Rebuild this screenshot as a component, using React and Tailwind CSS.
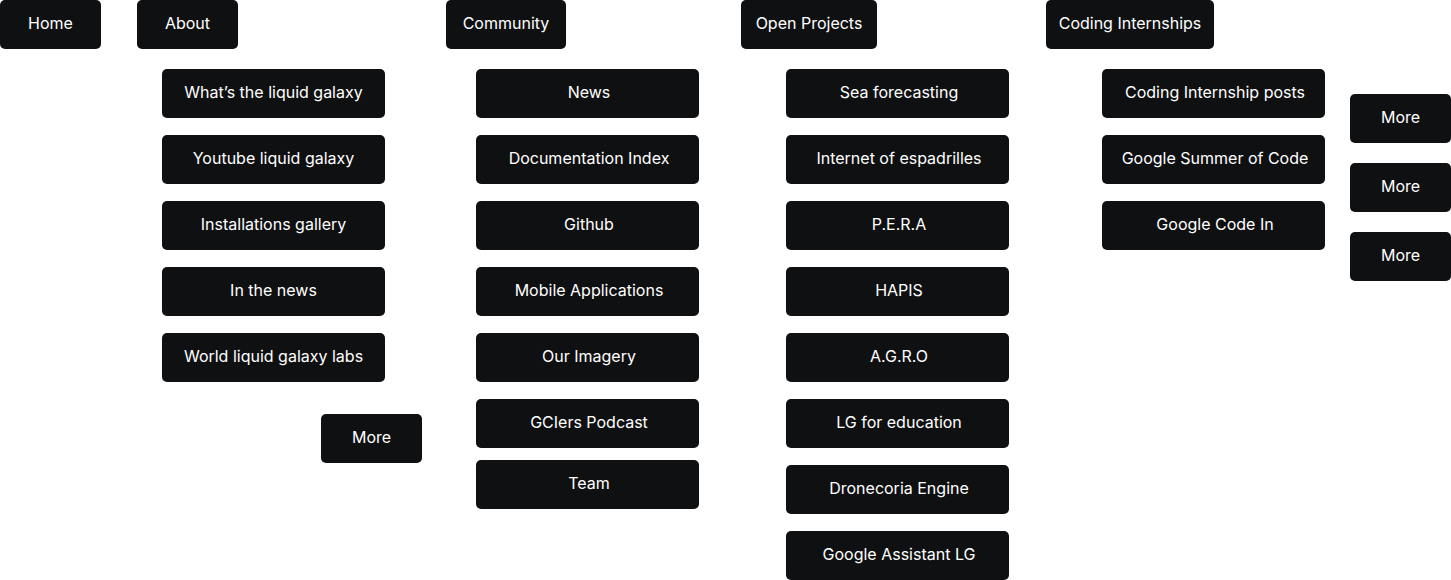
const base =
  "flex h-[49px] items-center justify-center rounded-[5px] bg-[#0f1011] pb-1 text-base text-white whitespace-nowrap";

function Node({ children, className }) {
  return (
    <a href="#" className={`${base} ${className}`}>
      {children}
    </a>
  );
}

function Section({
  title,
  titleWidth,
  items,
  className,
  listClass,
  itemClass = "w-[223px] pl-[3px]",
  children,
}) {
  return (
    <section className={`flex flex-col gap-5 ${className}`}>
      <Node className={titleWidth}>{title}</Node>
      <ul className={`flex flex-col gap-[17px] ${listClass}`}>
        {items.map((item) => (
          <li key={item}>
            <Node className={itemClass}>{item}</Node>
          </li>
        ))}
        {children}
      </ul>
    </section>
  );
}

export default function App() {
  return (
    <nav
      aria-label="Site map"
      className="flex items-start bg-white font-['Inter',sans-serif]"
    >
      <Node className="w-[101px] shrink-0">Home</Node>
      <Section
        title="About"
        titleWidth="w-[101px]"
        className="ml-9 shrink-0"
        listClass="pl-[25px]"
        itemClass="w-[223px]"
        items={[
          "What’s the liquid galaxy",
          "Youtube liquid galaxy",
          "Installations gallery",
          "In the news",
          "World liquid galaxy labs",
        ]}
      >
        <li className="flex justify-end pt-[15px] pl-[159px]">
          <Node className="w-[101px]">More</Node>
        </li>
      </Section>
      <Section
        title="Community"
        titleWidth="w-[120px]"
        className="ml-6 shrink-0"
        listClass="pl-[30px]"
        items={[
          "News",
          "Documentation Index",
          "Github",
          "Mobile Applications",
          "Our Imagery",
          "GCIers Podcast",
        ]}
      >
        <li className="-mt-[5px]">
          <Node className="w-[223px] pl-[3px]">Team</Node>
        </li>
      </Section>
      <Section
        title="Open Projects"
        titleWidth="w-[136px]"
        className="ml-[42px] shrink-0"
        listClass="pl-[45px]"
        items={[
          "Sea forecasting",
          "Internet of espadrilles",
          "P.E.R.A",
          "HAPIS",
          "A.G.R.O",
          "LG for education",
          "Dronecoria Engine",
          "Google Assistant LG",
        ]}
      />
      <Section
        title="Coding Internships"
        titleWidth="w-[168px]"
        className="ml-[37px] shrink-0"
        listClass="pl-14"
        items={["Coding Internship posts", "Google Summer of Code", "Google Code In"]}
      />
      <ul className="ml-[25px] flex shrink-0 flex-col gap-5 pt-[94px]">
        {[1, 2, 3].map((n) => (
          <li key={n}>
            <Node className="w-[101px]">More</Node>
          </li>
        ))}
      </ul>
    </nav>
  );
}
